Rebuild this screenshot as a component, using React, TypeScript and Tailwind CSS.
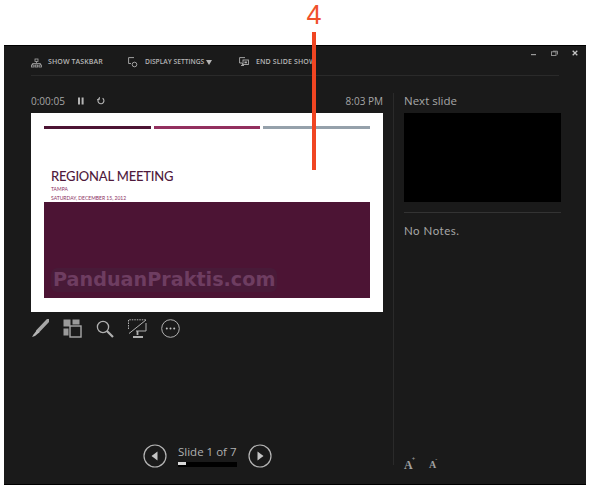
import React from "react";

const ToolText = ({ children }: { children: React.ReactNode }) => (
  <span className="text-[7px] font-semibold tracking-[0.1px] text-[#b5b5b5] whitespace-nowrap">{children}</span>
);

export default function App() {
  return (
    <div className="relative w-[594px] h-[489px] bg-white overflow-hidden font-['Open_Sans',sans-serif]">
      <div className="h-[45px] flex justify-center pl-[34px]">
        <span className="h-[31px] text-[27px] leading-[31px] text-[#f0512c] font-['Liberation_Sans',sans-serif]">4</span>
      </div>
      <div className="absolute left-[312px] top-[32px] w-[4px] h-[138px] bg-[#f04522] z-10" />

      <div className="ml-[4px] w-[582px] h-[440px] bg-[#1a1a1a] border-t border-b border-black flex flex-col">
        {/* toolbar */}
        <div className="h-[25px] mx-[27px] pt-[4px] flex items-center border-b border-[#2a2a2a] relative box-content">
          <div className="flex items-center gap-[6px] w-[97px]">
            <svg width="11" height="10" viewBox="0 0 11 10" fill="none" stroke="#a8a8a8" strokeWidth="0.8">
              <rect x="4" y="1" width="3" height="2.5" />
              <path d="M5.5 3.5V5M1.5 7V5.5h8V7" />
              <rect x="0.5" y="7" width="2.5" height="2" />
              <rect x="4.2" y="7" width="2.5" height="2" />
              <rect x="8" y="7" width="2.5" height="2" />
            </svg>
            <ToolText>SHOW TASKBAR</ToolText>
          </div>
          <div className="flex items-center gap-[7px] w-[111px]">
            <svg width="10" height="11" viewBox="0 0 10 11" fill="none" stroke="#b0b0b0" strokeWidth="0.9">
              <path d="M6 0.6H0.6V6.5H3" />
              <circle cx="6.5" cy="7.5" r="2.3" />
            </svg>
            <span className="text-[6.7px] font-semibold text-[#b5b5b5] whitespace-nowrap">DISPLAY SETTINGS</span>
            <svg className="-ml-[5px]" width="6" height="5" viewBox="0 0 6 5"><path d="M0 0h6L3 5z" fill="#b5b5b5" /></svg>
          </div>
          <div className="flex items-center gap-[7px]">
            <svg width="10" height="11" viewBox="0 0 10 11" fill="none" stroke="#b0b0b0" strokeWidth="0.9">
              <path d="M6 0.6H0.6V6H3M2 8.5h3M3.4 6v2.5" />
              <rect x="4" y="3" width="5.4" height="4.5" />
              <rect x="5.5" y="4.5" width="2.4" height="1.8" fill="#b0b0b0" stroke="none" />
            </svg>
            <ToolText>END SLIDE SHOW</ToolText>
          </div>
          {/* window controls */}
          <div className="absolute right-[-19px] top-[4px] flex items-center gap-[14px]">
            <svg width="6" height="6" viewBox="0 0 6 6"><rect x="0" y="4" width="5" height="1.2" fill="#9a9a9a" /></svg>
            <svg width="7" height="6" viewBox="0 0 7 6" fill="none" stroke="#9a9a9a" strokeWidth="0.9"><rect x="0.5" y="1.8" width="4.5" height="3.7" /><path d="M2 1.2h4.5v3.3" /></svg>
            <svg width="6" height="6" viewBox="0 0 6 6" stroke="#c4c4c4" strokeWidth="1.3"><path d="M0.7 0.7l4.6 4.6M5.3 0.7L0.7 5.3" /></svg>
          </div>
        </div>

        {/* body */}
        <div className="flex-1 flex pl-[27px] pt-[17px] pb-[19px]">
          {/* left column */}
          <div className="w-[352px] flex flex-col">
            <div className="h-[16px] flex items-center text-[10px] text-[#a6a6a6]">
              <span className="w-[47px]">0:00:05</span>
              <svg width="6" height="8" viewBox="0 0 6 8"><rect x="0" y="0.5" width="2" height="7" fill="#b5b5b5" /><rect x="3.6" y="0.5" width="2" height="7" fill="#b5b5b5" /></svg>
              <svg className="ml-[13px]" width="8" height="8" viewBox="0 0 8 8" fill="none" stroke="#b5b5b5" strokeWidth="1.1">
                <path d="M5.6 1.2A3 3 0 1 1 2 1.4" />
                <path d="M2.4 0v2.6H0" strokeWidth="0.9" />
              </svg>
              <span className="ml-auto">8:03 PM</span>
            </div>
            {/* slide */}
            <div className="mt-[4px] h-[199px] bg-white px-[13px] pt-[13px] pb-[14px] flex flex-col">
              <div className="flex gap-[3px]">
                <div className="w-[107px] h-[3px] bg-[#4d1434]" />
                <div className="w-[106px] h-[3px] bg-[#93305f]" />
                <div className="w-[107px] h-[3px] bg-[#95a1ab]" />
              </div>
              <div className="pl-[7px] font-['Lato',sans-serif]">
                <div className="mt-[39px] text-[13px] leading-[16px] font-medium tracking-[-0.2px] text-[#4f1a3c]">REGIONAL MEETING</div>
                <div className="mt-[1px] text-[5px] leading-[8px] text-[#8a2f62]">TAMPA</div>
                <div className="mt-[1px] text-[5px] leading-[8px] text-[#8a2f62]">SATURDAY, DECEMBER 15, 2012</div>
              </div>
              <div className="flex-1 bg-[#4c1434] flex items-end pl-[7px] pb-[6px]">
                <span className="px-[2px] text-[19.2px] leading-[24px] font-bold text-[#6e3d61] font-['DejaVu_Sans',sans-serif] bg-[#481a38] rounded-[6px]">PanduanPraktis.com</span>
              </div>
            </div>
            {/* tools */}
            <div className="mt-[7px] flex items-center gap-[14px]">
              <svg width="18" height="19" viewBox="0 0 18 19" fill="none">
                <path d="M17 1.5L7 12" stroke="#a6a6a6" strokeWidth="3.6" strokeLinecap="round" />
                <path d="M6 11L2.5 15.5 1 18l3-1 4.5-3.8z" fill="#b5b5b5" />
              </svg>
              <svg width="19" height="19" viewBox="0 0 19 19" fill="none">
                <rect x="0.5" y="0.5" width="7" height="7" fill="#9a9a9a" />
                <rect x="9.5" y="0.5" width="7" height="5" fill="#9a9a9a" />
                <rect x="0.5" y="9.5" width="5" height="7" fill="#9a9a9a" />
                <rect x="7" y="7" width="11" height="11" fill="#1a1a1a" stroke="#a8a8a8" strokeWidth="1.4" />
              </svg>
              <svg width="18" height="18" viewBox="0 0 18 18" fill="none" stroke="#b0b0b0">
                <circle cx="7" cy="7" r="5.6" strokeWidth="1.3" />
                <path d="M11 11l6 6" strokeWidth="2.2" />
              </svg>
              <svg width="19" height="19" viewBox="0 0 19 19" fill="none" stroke="#b0b0b0" strokeWidth="1">
                <path d="M0.5 10V0.8H18" strokeDasharray="1.5 1" />
                <path d="M18 1L1 14.5" />
                <path d="M18 4v8H8" />
                <path d="M9.5 12v4M5 18h10" strokeWidth="1.8" />
              </svg>
              <svg width="19" height="19" viewBox="0 0 19 19" fill="none">
                <circle cx="9.5" cy="9.5" r="8.8" stroke="#b0b0b0" strokeWidth="1" />
                <circle cx="5.8" cy="9.5" r="1" fill="#c0c0c0" />
                <circle cx="9.5" cy="9.5" r="1" fill="#c0c0c0" />
                <circle cx="13.2" cy="9.5" r="1" fill="#c0c0c0" />
              </svg>
            </div>
            {/* nav */}
            <div className="mt-auto flex items-center justify-center gap-[11px] pl-[1px] -mb-[3px]">
              <svg width="24" height="24" viewBox="0 0 24 24" fill="none">
                <circle cx="12" cy="12" r="11" stroke="#b5b5b5" strokeWidth="1.2" />
                <path d="M14.5 7.5v9L8.5 12z" fill="#c4c4c4" />
              </svg>
              <div className="w-[59px] flex flex-col">
                <span className="text-[11.5px] leading-[14px] text-[#b0b0b0] whitespace-nowrap">Slide 1 of 7</span>
                <div className="mt-[3px] h-[5px] bg-black">
                  <div className="w-[8px] h-[3px] bg-[#d8d8d8]" />
                </div>
              </div>
              <svg width="24" height="24" viewBox="0 0 24 24" fill="none">
                <circle cx="12" cy="12" r="11" stroke="#b5b5b5" strokeWidth="1.2" />
                <path d="M9.5 7.5v9l6-4.5z" fill="#c4c4c4" />
              </svg>
            </div>
          </div>

          {/* divider */}
          <div className="ml-[10px] w-px bg-[#2a2a2a]" />

          {/* right column */}
          <div className="ml-[10px] w-[157px] flex flex-col">
            <div className="h-[16px] flex items-center text-[11.5px] text-[#a6a6a6]">Next slide</div>
            <div className="mt-[4px] h-[89px] bg-black" />
            <div className="mt-[10px] h-px bg-[#333333]" />
            <div className="mt-[10px] text-[11.5px] leading-[16px] tracking-[0.5px] text-[#a6a6a6] font-['Lato',sans-serif]">No Notes.</div>
            <div className="mt-auto flex items-center gap-[14px] font-['Liberation_Serif',serif] text-[#a0a0a0] -mb-[6px]">
              <span className="text-[12px] leading-[12px] font-bold">A<sup className="text-[6px] align-super -ml-[1px]">+</sup></span>
              <span className="text-[10px] leading-[12px] font-bold">A<sup className="text-[6px] align-super -ml-[1px]">-</sup></span>
            </div>
          </div>
        </div>
      </div>
    </div>
  );
}
